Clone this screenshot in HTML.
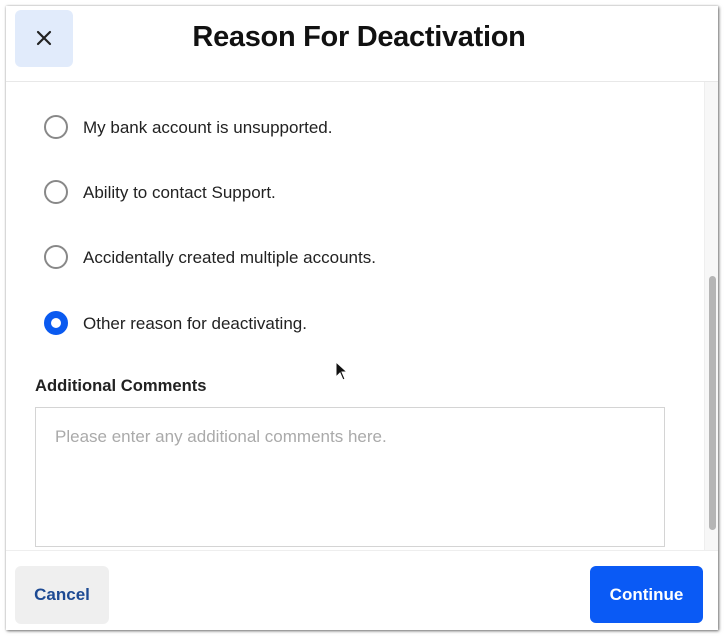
<!DOCTYPE html>
<html><head><style>
*{box-sizing:border-box;margin:0;padding:0}
body{width:728px;height:641px;background:#fff;font-family:"Liberation Sans",sans-serif;position:relative;overflow:hidden}
.card{position:absolute;left:6px;top:6px;width:712px;height:624px;background:#fff;box-shadow:1px 1px 3px rgba(0,0,0,.55),0 0 2px rgba(0,0,0,.2)}
.close{position:absolute;left:15px;top:10px;width:58px;height:57px;background:#e1ebfb;border-radius:6px}
.title{position:absolute;left:0;top:21px;width:718px;text-align:center;font-size:29px;font-weight:bold;color:#111;letter-spacing:-0.3px}
.hline{position:absolute;left:6px;top:81px;width:712px;height:1px;background:#e8e8e8}
.track{position:absolute;left:704px;top:82px;width:14px;height:468px;background:#f7f7f7;border-left:1px solid #eee}
.thumb{position:absolute;left:709px;top:276px;width:7px;height:254px;background:#b5b5b5;border-radius:4px}
.radio{position:absolute;left:44px;width:24px;height:24px;border:2px solid #888;border-radius:50%}
.radio.on{border:7px solid #0a5af0;background:#fff}
.lbl{position:absolute;left:83px;font-size:17px;color:#222}
.ac{position:absolute;left:35px;top:376px;font-size:16.6px;font-weight:bold;color:#222}
.ta{position:absolute;left:35px;top:407px;width:630px;height:140px;border:1px solid #d4d4d4}
.ph{position:absolute;left:55px;top:427px;font-size:17px;color:#aaa}
.fline{position:absolute;left:6px;top:550px;width:712px;height:1px;background:#eee}
.cancel{position:absolute;left:15px;top:566px;width:94px;height:58px;background:#efefef;border-radius:6px;color:#1d4a93;font-weight:bold;font-size:17px;text-align:center;line-height:58px}
.cont{position:absolute;left:590px;top:566px;width:113px;height:57px;background:#0a5af5;border-radius:6px;color:#fff;font-weight:bold;font-size:17px;text-align:center;line-height:57px}
</style></head><body>
<div class="card"></div>
<div class="close"><svg width="58" height="57" viewBox="0 0 58 57"><path d="M23 22L35 34M35 22L23 34" stroke="#222" stroke-width="2.2" stroke-linecap="round"/></svg></div>
<div class="title">Reason For Deactivation</div>
<div class="hline"></div>
<div class="track"></div><div class="thumb"></div>
<div class="radio" style="top:115px"></div><div class="lbl" style="top:118px">My bank account is unsupported.</div>
<div class="radio" style="top:180px"></div><div class="lbl" style="top:183px">Ability to contact Support.</div>
<div class="radio" style="top:245px"></div><div class="lbl" style="top:248px">Accidentally created multiple accounts.</div>
<div class="radio on" style="top:311px"></div><div class="lbl" style="top:314px">Other reason for deactivating.</div>
<svg style="position:absolute;left:335px;top:361px" width="14" height="22" viewBox="0 0 14 22"><path d="M1 1L1 16L5 12L8 19L10 18L7 11L12 11Z" fill="#111" stroke="#fff" stroke-width="1"/></svg>
<div class="ac">Additional Comments</div>
<div class="ta"></div>
<div class="ph">Please enter any additional comments here.</div>
<div class="fline"></div>
<div class="cancel">Cancel</div>
<div class="cont">Continue</div>
</body></html>
